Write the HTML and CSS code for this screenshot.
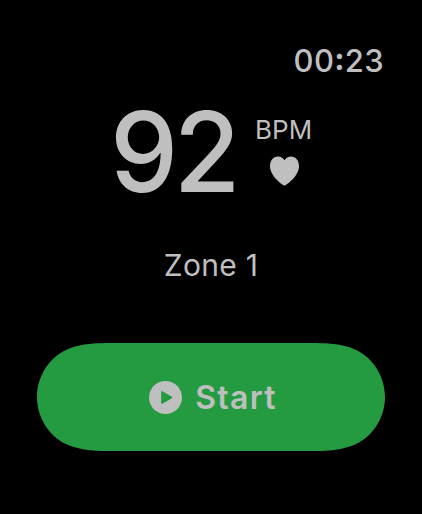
FILE: index.html
```html
<!DOCTYPE html>
<html lang="en">

<head>
<meta charset="utf-8">
<title>Heart Rate</title>
<link rel="stylesheet" href="styles.css">
</head>

<body>
<div class="watch">

<div class="clock">00<span class="colon">:</span>23</div>

<div class="rate">
<div class="value">92</div>
<div class="unit">
<div class="label">BPM</div>
<svg class="heart" viewBox="0 0 29 30">
<path d="M14.5 29.5C13.4 29.5 0 20.5 0 10.2C0 4.4 3.4 0.5 7.8 0.5C10.8 0.5 13.2 2.2 14.5 4.3C15.8 2.2 18.2 0.5 21.2 0.5C25.6 0.5 29 4.4 29 10.2C29 20.5 15.6 29.5 14.5 29.5Z"/>
</svg>
</div>
</div>

<div class="zone">Zone 1</div>

<button class="start">
<svg class="shape" viewBox="0 0 348 108">
<path d="M80 0H268C284 0 294 0.3 302 1.8C308 2.9 314 4.6 319 7C336 15 348 33.5 348 54C348 74.5 336 93 319 101C314 103.4 308 105.1 302 106.2C294 107.7 284 108 268 108H80C64 108 54 107.7 46 106.2C40 105.1 34 103.4 29 101C12 93 0 74.5 0 54C0 33.5 12 15 29 7C34 4.6 40 2.9 46 1.8C54 0.3 64 0 80 0Z"/>
</svg>
<svg class="play" viewBox="0 0 32 32">
<circle cx="16" cy="16" r="16"/>
<path d="M12.6 10.6V21.4L21.8 16Z"/>
</svg>
<span class="text">Start</span>
</button>

</div>
</body>

</html>
```

FILE: styles.css
```css
body {
    margin: 0;
    background: #000;
    font-family: Inter, "Liberation Sans", sans-serif;
    color: #bfbfbf;
}

.watch {
    box-sizing: border-box;
    display: flex;
    flex-direction: column;
    height: 514px;
    padding: 40px 37px 0;
}

.clock {
    align-self: flex-end;
    height: 41px;
    margin-right: 1px;
    font-size: 31px;
    line-height: 41px;
    font-weight: 500;
    letter-spacing: 0.3px;
}

.colon {
    font-weight: 700;
    line-height: 1;
    vertical-align: 2px;
}

.rate {
    display: flex;
    height: 140px;
    padding-left: 73px;
}

.value {
    width: 145px;
    font-size: 111px;
    line-height: 142px;
    font-weight: 550;
    letter-spacing: -4.5px;
    transform: scaleX(0.975);
    transform-origin: left;
}

.unit {
    display: flex;
    flex-direction: column;
    align-items: center;
    padding-top: 34px;
}

.label {
    font-size: 26px;
    line-height: 30px;
    letter-spacing: 0.1px;
}

.heart {
    width: 29px;
    height: 30px;
    margin-top: 11px;
    margin-left: 2px;
    fill: #bfbfbf;
}

.zone {
    margin-top: 23px;
    text-align: center;
    font-size: 30px;
    line-height: 42px;
    letter-spacing: 0.3px;
}

.start {
    position: relative;
    display: flex;
    align-items: center;
    justify-content: center;
    gap: 13px;
    height: 108px;
    margin-top: 57px;
    padding: 0 0 0 4px;
    border: none;
    background: none;
    color: #bfbfbf;
    font-family: inherit;
    font-size: 32px;
    font-weight: 600;
    letter-spacing: 1.3px;
}

/* softened pill behind the button content */
.shape {
    position: absolute;
    top: 0;
    left: 0;
    width: 348px;
    height: 108px;
    fill: #259b41;
}

.play, .text {
    position: relative;
}

.play {
    width: 33px;
    height: 33px;
    fill: #bfbfbf;
}

.play path {
    fill: #259b41;
    stroke: #259b41;
    stroke-width: 1.6;
    stroke-linejoin: round;
}
```
